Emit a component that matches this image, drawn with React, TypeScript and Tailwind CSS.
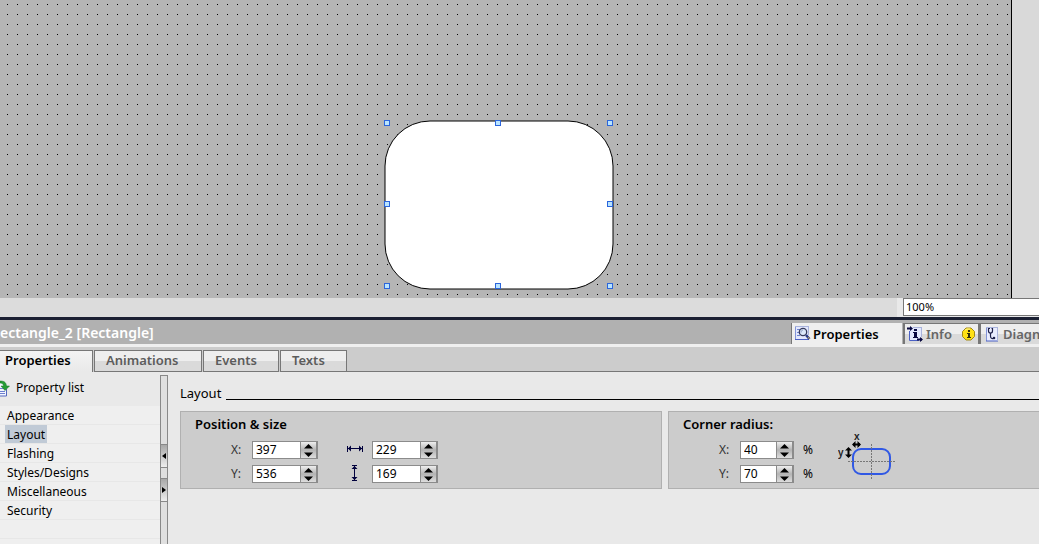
import { ReactNode, useState } from 'react';

const settingGroups = ['Appearance', 'Layout', 'Flashing', 'Styles/Designs', 'Miscellaneous', 'Security'];

const editorTabs = [
  { label: 'Properties', width: 'w-[93px] pl-[5px]' },
  { label: 'Animations', width: 'w-[108px] pl-[11px]' },
  { label: 'Events', width: 'w-[76px] pl-[11px]' },
  { label: 'Texts', width: 'w-[67px] pl-[11px]' },
];

const handles = [
  'left-0 top-0',
  'left-[111px] top-0',
  'left-[223px] top-0',
  'left-0 top-[81px]',
  'left-[223px] top-[81px]',
  'left-0 top-[163px]',
  'left-[111px] top-[163px]',
  'left-[223px] top-[163px]',
];

function PropertyListIcon() {
  return (
    <svg width="10" height="17" viewBox="0 0 10 17" aria-hidden="true">
      <path d="M0 3h3l4 4v9H0z" fill="#f4f6ff" />
      <path d="M6.500 9v7H0" fill="none" stroke="#5468bd" />
      <path d="M0 8.500h4M0 11.500h5M0 13.500h5" stroke="#6c80cf" />
      <path d="M0 1c4 0 6 1 6.500 5H9.500L5 10.500 1 6h2.500C3.500 4 2 3 0 3z" fill="#259c35" stroke="#147524" strokeWidth=".5" />
    </svg>
  );
}

function InspectIcon() {
  return (
    <svg width="17" height="17" viewBox="0 0 17 17" aria-hidden="true">
      <path d="M1 1h13v14H1z" fill="#e3e8fd" />
      <path d="M1.500 1v14" stroke="#8394d8" />
      <path d="M1 14.500h14" stroke="#4a60c4" />
      <path d="M1 1.500h13M14.500 1v9" stroke="#a9b3dc" />
      <path d="M3 4.500h3M3 7.500h2M3 10.500h3" stroke="#6f84d0" />
      <circle cx="9" cy="7" r="3.700" fill="#dce8fa" stroke="#373b5c" strokeWidth="1.300" />
      <path d="M7 7.500c0-1.500 1-2.500 2-2.500" fill="none" stroke="#8193bd" />
      <path d="M12 10l3.500 4" stroke="#2c3c86" strokeWidth="2.500" />
      <path d="M14 12l1.500 2" stroke="#c2a25b" />
    </svg>
  );
}

function InfoIcon() {
  return (
    <svg width="17" height="17" viewBox="0 0 17 17" aria-hidden="true">
      <path d="M3 1h11v14H2V5z" fill="#e3e8fd" />
      <path d="M14.500 1v10M6 1.500h8" stroke="#a9b3dc" />
      <path d="M2.500 5v9.500H12" fill="none" stroke="#4a60c4" />
      <path d="M0 2.500h4M10 13.500h5" stroke="#08083f" strokeWidth="2" />
      <path d="M3 0l3 2.500L3 5zM13 11l3 2.500-3 2.500z" fill="#08083f" />
      <path d="M7 3h3v2H7zM6 6h4v5h1v1H6v-1h1V7H6z" fill="#08083f" />
    </svg>
  );
}

function AlertIcon() {
  return (
    <svg width="13" height="14" viewBox="0 0 13 14" aria-hidden="true">
      <path d="M4 1h5l3.500 3.500v5L9 13H4L.5 9.500v-5z" fill="#ffe115" stroke="#a28a18" />
      <path d="M3 3l2-1h3" fill="none" stroke="#fff79b" />
      <path d="M6 3h2v2H6zM5 6h3v4h1v1H5v-1h1V7H5z" fill="#33300c" />
    </svg>
  );
}

function DiagnosticsIcon() {
  return (
    <svg width="14" height="17" viewBox="0 0 14 17" aria-hidden="true">
      <path d="M1 1h11v14H1z" fill="#e9edff" />
      <path d="M1.500 1v14" stroke="#8394d8" />
      <path d="M1 15h12" stroke="#4a60c4" />
      <path d="M1 1.500h11M12.500 1v14" stroke="#a9b3dc" />
      <path d="M5 2.500H3.500V5q0 2 2 2t2-2V2.500H6.500M5.500 7v3q0 3 3 2.500" fill="none" stroke="#20234b" strokeWidth="1.200" />
      <circle cx="9" cy="12" r="1.300" fill="#20234b" />
    </svg>
  );
}

function WidthIcon() {
  return (
    <svg width="16" height="8" viewBox="0 0 16 8" aria-hidden="true">
      <path d="M.5 1v6M15.500 1v6M1 3.500h14" stroke="#00003c" />
      <path d="M1 3.500l3-3v6zM15 3.500l-3-3v6z" fill="#00003c" />
    </svg>
  );
}

function HeightIcon() {
  return (
    <svg width="8" height="16" viewBox="0 0 8 16" aria-hidden="true">
      <path d="M1 .5h5M1 15.500h5M3.500 1v14" stroke="#00003c" />
      <path d="M3.500 1l-3 3h6zM3.500 15l-3-3h6z" fill="#00003c" />
    </svg>
  );
}

function RadiusDiagram() {
  return (
    <svg width="60" height="52" viewBox="0 -4 60 52" role="img" aria-label="Corner radius x and y">
      <rect x="15" y="17" width="37" height="25" rx="8" fill="none" stroke="#3058e4" strokeWidth="2" />
      <path d="M33.500 12v36M10 29.500h48" stroke="#777" strokeDasharray="2 1" />
      <text x="16" y="8" fontSize="10" fontWeight="600" fill="#222">x</text>
      <text x="0" y="24" fontSize="10" fontWeight="600" fill="#222">y</text>
      <path d="M15 12.500h7M10.500 17v7" stroke="#000" strokeWidth="2" />
      <path d="M14 12.500l3.500-3.500v7zM23 12.500l-3.500-3.500v7zM10.500 15l-3.500 3.500h7zM10.500 26l-3.500-3.500h7z" fill="#000" />
    </svg>
  );
}

interface NumberFieldProps {
  label: string;
  initial: string;
  width: string;
}

function NumberField({ label, initial, width }: NumberFieldProps) {
  const [value, setValue] = useState(initial);
  const step = (amount: number) => setValue(String((Number(value) || 0) + amount));

  return (
    <div className={`flex h-[18px] shrink-0 border border-[#8b8b8b] bg-white ${width}`}>
      <input
        aria-label={label}
        value={value}
        onChange={(e) => setValue(e.target.value)}
        className="min-w-0 flex-1 bg-white pl-[3px] text-[12px] leading-4 outline-none"
      />
      <div className="flex w-[17px] flex-col border-x border-[#8b8b8b] bg-linear-to-b from-[#eeeeee] via-[#b4b4b4] to-[#dddddd]">
        <button type="button" aria-label={`Increase ${label}`} onClick={() => step(1)} className="flex h-2 items-center justify-center">
          <svg width="9" height="5" viewBox="0 0 9 5"><path d="M4.500 0L9 4.500H0z" /></svg>
        </button>
        <button type="button" aria-label={`Decrease ${label}`} onClick={() => step(-1)} className="flex h-2 items-center justify-center">
          <svg width="9" height="5" viewBox="0 0 9 5"><path d="M0 .5h9L4.500 5z" /></svg>
        </button>
      </div>
    </div>
  );
}

function Group({ title, className, children }: { title: string; className: string; children: ReactNode }) {
  return (
    <section className={`h-[78px] border border-[#b0b0b0] bg-[#cccccc] pl-[14px] ${className}`}>
      <h3 className="pt-1 text-[13px] leading-4 font-semibold">{title}</h3>
      {children}
    </section>
  );
}

function Canvas() {
  return (
    <div className="flex h-[298px] bg-[#d9d9d9]">
      <div className="relative flex-1 overflow-hidden border-r border-black bg-[#b5b5b5]">
        <svg className="block h-full w-full" aria-hidden="true">
          <defs>
            <pattern id="grid" width="10" height="10" patternUnits="userSpaceOnUse">
              <rect x="7" y="4" width="1" height="1" />
            </pattern>
          </defs>
          <rect width="100%" height="100%" fill="url(#grid)" />
        </svg>
        <div className="absolute top-[120px] left-[384px]">
          <svg width="230" height="170" viewBox="0 0 230 170" aria-hidden="true">
            <rect x="1" y="1" width="228" height="168" rx="45" fill="#fff" stroke="#000" />
          </svg>
          {handles.map((position) => (
            <span key={position} className={`absolute size-[6px] border border-[#2b65dc] bg-[#b9e4ff] ${position}`} />
          ))}
        </div>
      </div>
      <div className="w-[27px]" />
    </div>
  );
}

function InspectorHeader() {
  return (
    <header className="flex h-[24px] justify-between overflow-hidden bg-[#b1b1b1] pt-[3px]">
      <h1 className="text-[14px] leading-[19px] font-semibold text-white">ectangle_2 [Rectangle]</h1>
      <div className="flex w-[248px] shrink-0 overflow-hidden text-[13px] font-semibold text-[#666666]">
        <button type="button" className="flex w-[111px] shrink-0 items-center gap-0.5 border-l border-[#777777] bg-[#efefef] pl-0.5 text-black">
          <InspectIcon />
          <span className="pt-0.5">Properties</span>
        </button>
        <button type="button" className="ml-px flex w-[77px] shrink-0 items-center border-2 border-t border-b-0 border-[#777777] bg-linear-to-b from-[#eeeeee] from-50% to-[#dadada] to-50% pl-0.5">
          <InfoIcon />
          <span className="ml-0.5 flex-1 pt-px text-left">Info</span>
          <span className="mr-[3px]"><AlertIcon /></span>
        </button>
        <button type="button" className="flex w-[110px] shrink-0 items-center gap-1 border border-b-0 border-[#777777] bg-linear-to-b from-[#eeeeee] from-50% to-[#dadada] to-50% pl-1">
          <DiagnosticsIcon />
          <span className="pt-px">Diagnostics</span>
        </button>
      </div>
    </header>
  );
}

function EditorTabs() {
  const [active, setActive] = useState('Properties');

  return (
    <nav className="flex h-[25px] bg-[#cccccc] pt-[3px]">
      {editorTabs.map((tab) => (
        <button
          key={tab.label}
          type="button"
          onClick={() => setActive(tab.label)}
          className={`mr-px flex border-t border-r border-[#777777] text-left text-[13px] leading-[18px] font-semibold ${tab.width} ${
            tab.label === active
              ? 'bg-linear-to-b from-[#f3f3f3] to-[#e9e9e9] text-black'
              : 'border-b border-l bg-linear-to-b from-[#eeeeee] from-50% to-[#dadada] to-50% text-[#5c5c5c]'
          }`}
        >
          {tab.label}
        </button>
      ))}
      <div className="-ml-px flex-1 border-b border-[#777777]" />
    </nav>
  );
}

function Sidebar() {
  const [selected, setSelected] = useState('Layout');

  return (
    <aside className="w-[160px] shrink-0 bg-[#efefef]">
      <div className="flex h-[34px] items-center gap-1.5 bg-[#e9e9e9] pb-0.5 text-[12px]">
        <PropertyListIcon />Property list
      </div>
      <ul>
        {settingGroups.map((name) => (
          <li key={name} className="flex h-[19px] border-b border-[#e7e7e7] pl-[5px]">
            <button
              type="button"
              onClick={() => setSelected(name)}
              className={`h-[18px] px-0.5 text-[12px] leading-5 ${name === selected ? 'bg-[#c0cad6]' : ''}`}
            >
              {name}
            </button>
          </li>
        ))}
        <li className="h-[19px] border-b border-[#e7e7e7]" />
      </ul>
    </aside>
  );
}

function Splitter() {
  return (
    <div className="mt-[3px] flex w-2 shrink-0 flex-col border-x border-t border-[#888888] bg-[#dfdfdf] pt-[68px]">
      <button type="button" aria-label="Collapse list" className="flex h-6 items-center justify-center border-y border-[#888888] bg-linear-to-b from-[#a8a8a8] to-[#eeeeee]">
        <svg width="4" height="6" viewBox="0 0 4 6"><path d="M4 0v6L0 3z" /></svg>
      </button>
      <button type="button" aria-label="Expand list" className="mt-[10px] flex h-6 items-center justify-center border-y border-[#888888] bg-linear-to-b from-[#a8a8a8] to-[#eeeeee]">
        <svg width="4" height="6" viewBox="0 0 4 6"><path d="M0 0v6l4-3z" /></svg>
      </button>
    </div>
  );
}

export default function App() {
  return (
    <main className="min-h-screen overflow-hidden bg-[#e9e9e9] font-['Noto_Sans',sans-serif] text-black">
      <Canvas />
      <div className="flex h-[19px] justify-end bg-[#dcdcdc]">
        <div className="w-[142px] bg-[#e9e9e9] pl-1.5">
          <input aria-label="Zoom" defaultValue="100%" className="block h-[18px] w-full border border-r-0 border-[#777777] bg-white pb-0.5 pl-0.5 text-[11px] outline-none" />
        </div>
      </div>
      <div className="h-[3px] bg-[#1b2033]" />
      <InspectorHeader />
      <div className="h-[3px] bg-[#efefef]" />
      <EditorTabs />
      <div className="flex min-h-[172px]">
        <Sidebar />
        <Splitter />
        <div className="min-w-0 flex-1 pl-3">
          <div className="flex items-end gap-[5px] pt-3">
            <h2 className="text-[13px] leading-[18px]">Layout</h2>
            <div className="mb-[2px] flex-1 border-b border-black" />
          </div>
          <div className="mt-[9px] flex gap-1.5">
            <Group title="Position & size" className="w-[482px] shrink-0">
              <div className="mt-[9px] grid grid-cols-[57px_66px_54px_66px] items-center gap-y-[6px] text-[12px] leading-[18px]">
                <span className="pl-9 text-[#333333]">X:</span>
                <NumberField label="X position" initial="397" width="w-[66px]" />
                <span className="flex justify-center pb-0.5 pl-5"><WidthIcon /></span>
                <NumberField label="Width" initial="229" width="w-[66px]" />
                <span className="pl-9 text-[#333333]">Y:</span>
                <NumberField label="Y position" initial="536" width="w-[66px]" />
                <span className="flex justify-center pb-0.5 pl-5"><HeightIcon /></span>
                <NumberField label="Height" initial="169" width="w-[66px]" />
              </div>
            </Group>
            <Group title="Corner radius:" className="min-w-0 flex-1 border-r-0">
              <div className="flex">
                <div className="mt-[9px] grid grid-cols-[57px_54px_44px] items-center gap-y-[6px] text-[12px] leading-[18px]">
                  <span className="pl-9 text-[#333333]">X:</span>
                  <NumberField label="Radius X" initial="40" width="w-[54px]" />
                  <span className="pl-[9px]">%</span>
                  <span className="pl-9 text-[#333333]">Y:</span>
                  <NumberField label="Radius Y" initial="70" width="w-[54px]" />
                  <span className="pl-[9px]">%</span>
                </div>
                <div className="-mt-1">
                  <RadiusDiagram />
                </div>
              </div>
            </Group>
          </div>
        </div>
      </div>
    </main>
  );
}
